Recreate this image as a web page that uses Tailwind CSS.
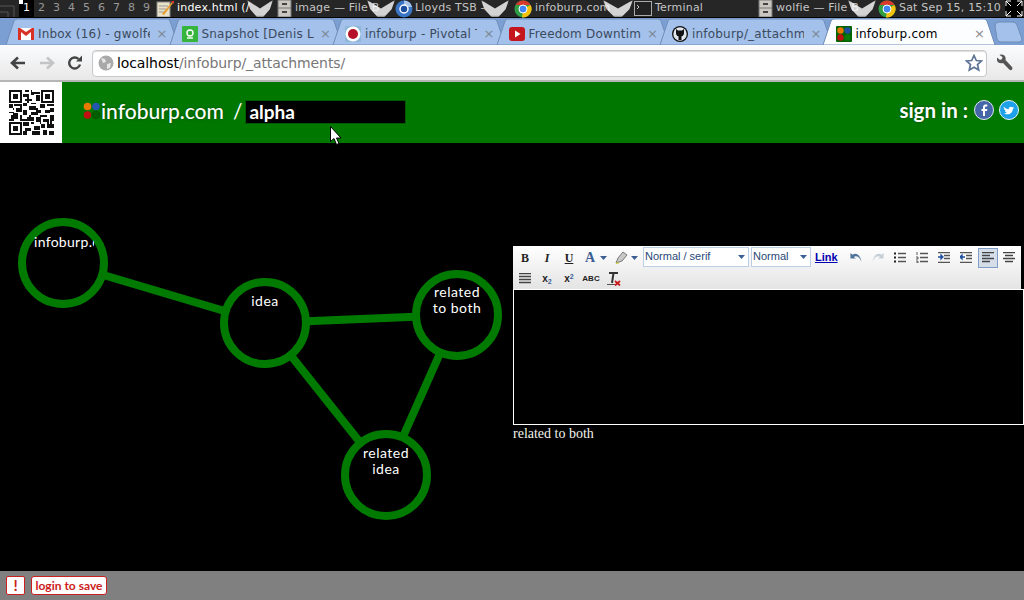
<!DOCTYPE html>
<html lang="en">
<head>
  <meta charset="UTF-8" />
  <title>infoburp.com</title>
  <script src="https://cdn.jsdelivr.net/npm/@tailwindcss/browser@4"></script>
</head>
<body class="w-[1024px] h-[600px] overflow-hidden bg-black flex flex-col relative font-['DejaVu_Sans',sans-serif]">

  <!-- desktop panel -->
  <div class="h-[18px] shrink-0 bg-[#262626] border-b border-black flex items-center text-[11px] tracking-[0.2px] text-[#c4c4c4] whitespace-nowrap relative">
    <svg class="w-[19px] h-[17px] shrink-0" viewBox="0 0 19 17"><path d="M0 6h14v11M0 12h8v5" fill="none" stroke="#555"/></svg>
    <div class="w-[15px] h-[17px] bg-black text-white text-center relative">1<span class="absolute left-0 top-0 w-[4px] h-[4px] bg-white"></span></div>
    <div class="flex text-center text-[#999]">
      <span class="w-[15px]">2</span><span class="w-[15px]">3</span><span class="w-[15px]">4</span><span class="w-[15px]">5</span><span class="w-[15px]">6</span><span class="w-[15px]">7</span><span class="w-[15px]">8</span><span class="w-[15px]">9</span>
    </div>
    <!-- notepad -->
    <svg class="w-[18px] h-[17px] ml-[2px] shrink-0" viewBox="0 0 18 17"><rect x="1" y="2" width="13" height="15" fill="#e8e2c8" stroke="#888"/><path d="M3 6h9M3 9h7M3 12h5" stroke="#999"/><path d="M6 14 16 2l1 1L8 15z" fill="#e89a2a"/><path d="M15 1h3v3z" fill="#d33"/></svg>
    <span class="ml-[3px] w-[82px] overflow-hidden text-white">index.html (/</span>
    <span class="w-[26px] h-[17px] bg-white/80 blur-[1px] -ml-[12px] [clip-path:polygon(0_0,50%_50%,100%_0,88%_55%,62%_100%,38%_100%,12%_55%)]"></span>
    <!-- filing cabinet -->
    <svg class="w-[16px] h-[17px] ml-[3px] shrink-0" viewBox="0 0 16 17"><rect x="2" y="0" width="13" height="17" fill="#c9c7bf" stroke="#777"/><path d="M2 8h13" stroke="#777"/><path d="M6 4h5M6 12h5" stroke="#444" stroke-width="2"/></svg>
    <span class="ml-[3px] w-[84px] overflow-hidden">image — File B</span>
    <span class="w-[28px] h-[17px] bg-white/80 blur-[1px] -ml-[12px] [clip-path:polygon(0_0,50%_50%,100%_0,88%_55%,62%_100%,38%_100%,12%_55%)]"></span>
    <!-- chromium -->
    <svg class="w-[18px] h-[18px] shrink-0" viewBox="0 0 18 18"><circle cx="9" cy="9" r="8.5" fill="#3a74c4"/><path d="M9 .5A8.5 8.5 0 0 1 17 7H9z" fill="#a9c4e8"/><circle cx="9" cy="9" r="4" fill="#1c4f9c" stroke="#fff" stroke-width="1.5"/></svg>
    <span class="ml-[2px] w-[78px] overflow-hidden">Lloyds TSB -</span>
    <span class="w-[28px] h-[17px] bg-white/80 blur-[1px] -ml-[12px] [clip-path:polygon(0_0,50%_50%,100%_0,88%_55%,62%_100%,38%_100%,12%_55%)]"></span>
    <!-- chrome -->
    <svg class="w-[18px] h-[18px] ml-[5px] shrink-0" viewBox="0 0 18 18"><circle cx="9" cy="9" r="8.5" fill="#2f9e44"/><path d="M1.6 5A8.5 8.5 0 0 1 16.6 5H9z" fill="#d8392b"/><path d="M16.6 5A8.5 8.5 0 0 1 8 17.4L9 9z" fill="#f4c20d"/><circle cx="9" cy="9" r="4" fill="#4285f4" stroke="#fff"/></svg>
    <span class="ml-[3px] w-[76px] overflow-hidden">infoburp.com</span>
    <span class="w-[30px] h-[17px] bg-white/80 blur-[1px] -ml-[8px] [clip-path:polygon(0_0,50%_50%,100%_0,88%_55%,62%_100%,38%_100%,12%_55%)]"></span>
    <!-- terminal -->
    <svg class="w-[18px] h-[15px] ml-[1px] shrink-0" viewBox="0 0 18 15"><rect x=".5" y=".5" width="17" height="14" fill="#222" stroke="#aaa"/><path d="M3 4l2 2-2 2" fill="none" stroke="#ccc"/></svg>
    <span class="ml-[3px] w-[102px]">Terminal</span>
    <svg class="w-[16px] h-[17px] shrink-0" viewBox="0 0 16 17"><rect x="2" y="0" width="13" height="17" fill="#c9c7bf" stroke="#777"/><path d="M2 8h13" stroke="#777"/><path d="M6 4h5M6 12h5" stroke="#444" stroke-width="2"/></svg>
    <span class="ml-[3px] w-[84px] overflow-hidden">wolfie — File B</span>
    <span class="w-[28px] h-[17px] bg-white/80 blur-[1px] -ml-[12px] [clip-path:polygon(0_0,50%_50%,100%_0,88%_55%,62%_100%,38%_100%,12%_55%)]"></span>
    <svg class="w-[18px] h-[18px] ml-[2px] shrink-0" viewBox="0 0 18 18"><circle cx="9" cy="9" r="8.5" fill="#2f9e44"/><path d="M1.6 5A8.5 8.5 0 0 1 16.6 5H9z" fill="#d8392b"/><path d="M16.6 5A8.5 8.5 0 0 1 8 17.4L9 9z" fill="#f4c20d"/><circle cx="9" cy="9" r="4" fill="#4285f4" stroke="#fff"/></svg>
    <span class="ml-[3px] w-[106px]">Sat Sep 15, 15:10</span>
    <svg class="w-[18px] h-[17px] shrink-0" viewBox="0 0 18 17"><rect width="18" height="17" fill="#000"/><path d="M1 6V1h5M1 1l5 5M17 6V1h-5M17 1l-5 5M1 11v5h5M1 16l5-5M17 11v5h-5M17 16l-5-5" fill="none" stroke="#fff"/></svg>
  </div>

  <!-- tab strip -->
  <div class="h-[27px] shrink-0 bg-[#7b9fd3] relative flex items-center pl-[10px] pt-[4px] text-[12px] tracking-[0.2px] text-[#3c4a5e] whitespace-nowrap">
    <svg class="absolute left-0 top-0 w-[1024px] h-[27px]" viewBox="0 0 1024 27">
      <g fill="#a3c1ea" stroke="#6f8db8">
        <path d="M6 27 14 3q1-2 3-2h150q2 0 3 2l8 24z"/>
        <path d="M170 27 178 3q1-2 3-2h150q2 0 3 2l8 24z"/>
        <path d="M333 27 341 3q1-2 3-2h150q2 0 3 2l8 24z"/>
        <path d="M497 27 505 3q1-2 3-2h150q2 0 3 2l8 24z"/>
        <path d="M660 27 668 3q1-2 3-2h150q2 0 3 2l8 24z"/>
        <path d="M995 8q0-4 4-4h14q3 0 4 3l5 14q0 3-3 3h-18q-3 0-4-3z"/>
      </g>
      <path d="M823 27 831 3q1-2 3-2h150q2 0 3 2l8 24z" fill="#fbfdff" stroke="#6f8db8"/>
    </svg>
    <div class="relative w-[163.5px] flex items-center pl-[8px] pr-[6px]">
      <svg class="w-[16px] h-[12px] shrink-0" viewBox="0 0 16 12"><rect width="16" height="12" fill="#fff"/><path d="M0 0v12h3V4l5 4 5-4v8h3V0h-2L8 4 2 0z" fill="#d93025"/></svg>
      <span class="ml-[4px] w-[112px] overflow-hidden">Inbox (16) - gwolfe</span>
      <span class="ml-auto text-[#7d8794] text-[13px]">×</span>
    </div>
    <div class="relative w-[163.5px] flex items-center pl-[8px] pr-[6px]">
      <svg class="w-[16px] h-[16px] shrink-0" viewBox="0 0 16 16"><rect width="16" height="16" rx="1" fill="#35b53c"/><circle cx="8" cy="7" r="3" fill="none" stroke="#fff" stroke-width="1.4"/><path d="M5 12h6" stroke="#fff" stroke-width="1.4"/></svg>
      <span class="ml-[4px] w-[112px] overflow-hidden">Snapshot  [Denis L</span>
      <span class="ml-auto text-[#7d8794] text-[13px]">×</span>
    </div>
    <div class="relative w-[163.5px] flex items-center pl-[8px] pr-[6px]">
      <svg class="w-[16px] h-[16px] shrink-0" viewBox="0 0 16 16"><rect width="16" height="16" fill="#8fb8d8"/><circle cx="8" cy="8" r="7.5" fill="#fff"/><circle cx="8" cy="8" r="5" fill="#b3122a"/></svg>
      <span class="ml-[4px] w-[112px] overflow-hidden">infoburp - Pivotal T</span>
      <span class="ml-auto text-[#7d8794] text-[13px]">×</span>
    </div>
    <div class="relative w-[163.5px] flex items-center pl-[8px] pr-[6px]">
      <svg class="w-[16px] h-[14px] shrink-0" viewBox="0 0 16 14"><rect width="16" height="14" rx="3" fill="#c4161c"/><path d="M6 3.5v7L11.500 7z" fill="#fff"/></svg>
      <span class="ml-[4px] w-[112px] overflow-hidden">Freedom Downtime</span>
      <span class="ml-auto text-[#7d8794] text-[13px]">×</span>
    </div>
    <div class="relative w-[163.5px] flex items-center pl-[8px] pr-[6px]">
      <svg class="w-[16px] h-[16px] shrink-0" viewBox="0 0 16 16"><circle cx="8" cy="8" r="8" fill="#111"/><circle cx="8" cy="8" r="6.700" fill="#dfe6ee"/><path d="M4 3l2 1.500h4L12 3v4c0 2-1 3-2.500 3.300V14h-3v-3.700C5 10 4 9 4 7z" fill="#111"/></svg>
      <span class="ml-[4px] w-[112px] overflow-hidden">infoburp/_attachm</span>
      <span class="ml-auto text-[#7d8794] text-[13px]">×</span>
    </div>
    <div class="relative w-[163.5px] flex items-center pl-[8px] pr-[6px] text-black">
      <svg class="w-[16px] h-[16px] shrink-0" viewBox="0 0 16 16"><rect width="16" height="16" rx="1" fill="#006400"/><circle cx="4.500" cy="4.500" r="3.200" fill="#e87a00"/><circle cx="11.500" cy="4.500" r="3.200" fill="#1d4fa0"/><circle cx="4.500" cy="11.500" r="3.200" fill="#c01010"/><circle cx="11.500" cy="11.500" r="3.200" fill="#0a7a0a"/></svg>
      <span class="ml-[4px]">infoburp.com</span>
      <span class="ml-auto text-[#8a8a8a] text-[13px]">×</span>
    </div>
  </div>

  <!-- browser toolbar -->
  <div class="h-[37px] shrink-0 bg-gradient-to-b from-[#fbfcfe] to-[#e8e8e8] border-b-2 border-[#b5b5b5] flex items-center pl-[10px] pr-[8px]">
    <svg class="w-[16px] h-[14px] shrink-0" viewBox="0 0 16 14"><path d="M15 7H3M8 1.500 2 7l6 5.500" fill="none" stroke="#444" stroke-width="2.600"/></svg>
    <svg class="w-[16px] h-[14px] ml-[13px] shrink-0" viewBox="0 0 16 14"><path d="M1 7h12M8 1.500 14 7l-6 5.500" fill="none" stroke="#c4c4c4" stroke-width="2.600"/></svg>
    <svg class="w-[16px] h-[16px] ml-[12px] shrink-0" viewBox="0 0 16 16"><path d="M13 9.500A5.500 5.500 0 1 1 11.500 4" fill="none" stroke="#444" stroke-width="2.400"/><path d="M9 6.500h6V.5z" fill="#444"/></svg>
    <div class="ml-[9px] w-[895px] h-[27px] mt-[1px] bg-white border border-[#c8c8c8] rounded-[4px] flex items-center pl-[5px] text-[14px] tracking-[-0.1px] shadow-[inset_0_1px_1px_#ddd]">
      <svg class="w-[16px] h-[16px] shrink-0" viewBox="0 0 16 16"><circle cx="8" cy="8" r="7.500" fill="#a9a9a9"/><path d="M3 3l4 1 1 3-3 1zM9 9l4-1-1 5-3 1z" fill="#e6e6e6"/></svg>
      <span class="ml-[3px] text-black">localhost<span class="text-[#777]">/infoburp/_attachments/</span></span>
      <svg class="w-[18px] h-[18px] ml-auto mr-[3px] shrink-0" viewBox="0 0 18 18"><path d="M9 1.500l2.300 5 5.200.5-4 3.500 1.200 5.500L9 13.200 4.300 16l1.200-5.500-4-3.500 5.200-.5z" fill="#fff" stroke="#5f7596" stroke-width="1.700"/></svg>
    </div>
    <svg class="w-[18px] h-[18px] ml-[8px] shrink-0" viewBox="0 0 18 18"><path d="M2 3.500l3 2.500 2-1 .5-2L4.500 1C7 0 10 1 10.500 3.500c.3 1 0 2 0 2.500l6.500 7c.7 1 .5 2-.2 2.700-.8.700-1.800.6-2.500-.1L8 9C6 9.500 3 9.500 2 6.500z" fill="#555"/></svg>
  </div>

  <!-- site header -->
  <header class="h-[61px] shrink-0 bg-[#007800] flex items-center relative font-['Lato',sans-serif] text-white">
    <div class="w-[62px] h-[61px] bg-white shrink-0 flex items-center justify-center">
      <svg class="w-[45px] h-[45px]" viewBox="0 0 25 25" shape-rendering="crispEdges"><path fill="#111" d="M0 0h7v7H0zM18 0h7v7h-7zM0 18h7v7H0z"/><path fill="#fff" d="M1 1h5v5H1zM19 1h5v5h-5zM1 19h5v5H1z"/><path fill="#111" d="M2 2h3v3H2zM20 2h3v3h-3zM2 20h3v3H2zM9 0h2v1H9zM12 0h1v3h-1zM14 1h3v1h-3zM8 2h3v2H8zM15 3h2v3h-2zM9 5h4v1H9zM8 7h2v2H8zM12 7h3v1h-3zM0 8h2v2H0zM3 8h4v1H3zM17 8h3v2h-3zM21 8h4v1h-4zM11 9h4v2h-4zM4 10h3v2H4zM0 12h3v1H0zM8 11h2v3H8zM16 11h2v2h-2zM20 11h3v2h-3zM12 12h3v2h-3zM1 14h4v2H1zM6 14h1v3H6zM18 14h3v1h-3zM23 14h2v3h-2zM10 15h4v2h-4zM15 15h2v3h-2zM19 16h3v2h-3zM8 18h3v2H8zM12 18h2v1h-2zM18 19h2v2h-2zM21 19h4v2h-4zM9 21h3v2H9zM14 20h3v2h-3zM8 23h2v2H8zM13 23h4v2h-4zM19 22h2v3h-2zM22 23h3v2h-3zM2 10h1v1H2zM0 16h3v1H0zM13 1h1v2h-1zM10 4h1v3h-1zM6 9h1v2H6zM15 10h1v4h-1zM18 9h2v1h-2zM23 10h2v2h-2zM2 13h3v1H2zM7 16h3v1H7zM11 14h1v1h-1zM17 14h1v5h-1zM21 16h1v3h-1zM23 17h1v2h-1z"/></svg>
    </div>
    <div class="flex items-center -mt-[4px]">
      <svg class="w-[18px] h-[18px] ml-[21px] shrink-0" viewBox="0 0 18 18"><circle cx="4.500" cy="4.500" r="3.800" fill="#e87a00"/><circle cx="13" cy="4.500" r="3.800" fill="#2458b0"/><circle cx="4.500" cy="13" r="3.800" fill="#c01010"/><circle cx="13" cy="13" r="3.800" fill="#006000" stroke="#004c00" stroke-width=".8"/></svg>
      <span class="text-[21px] leading-none font-medium [text-shadow:0_0_3px_#004400]">infoburp.com</span>
      <span class="text-[21px] leading-none ml-[9px]">/</span>
      <div class="ml-[3px] w-[161px] h-[24px] bg-black border border-[#005a00] pl-[3px] flex items-center text-[19px] font-bold mt-[3px]">alpha</div>
    </div>
    <div class="ml-auto flex items-center mr-[5px] -mt-[5px]">
      <span class="text-[20.5px] font-bold mr-[6px] [text-shadow:0_0_3px_#004400]">sign in :</span>
      <svg class="w-[20px] h-[20px] mr-[5px] shrink-0" viewBox="0 0 20 20"><circle cx="10" cy="10" r="9.500" fill="#4567a8" stroke="#dfe6f5"/><path d="M11 16v-5h2l.3-2H11V7.500c0-.7.300-1 1-1h1.300v-2H11.500C9.500 4.500 9 6 9 7.200V9H7.500v2H9v5z" fill="#fff"/></svg>
      <svg class="w-[20px] h-[20px] shrink-0" viewBox="0 0 20 20"><circle cx="10" cy="10" r="9.500" fill="#1da1e8" stroke="#e6f6ff"/><path d="M4.500 6.500c1.500 1.700 3.300 2.600 5.300 2.700-.3-2 1.800-3.300 3.300-2 .6 0 1.200-.2 1.600-.5-.2.600-.5 1-1 1.300l1.300-.3c-.3.500-.7.900-1.200 1.200.1 3.500-3.500 7-8.800 4.500 1.300 0 2.300-.3 3-1-1 0-1.900-.6-2.200-1.500.4.100.8.100 1.100 0C5.500 10 4.700 9 4.800 8c.3.200.7.300 1 .3-1-.6-1.400-1-1.300-1.800z" fill="#fff"/></svg>
    </div>
  </header>

  <!-- main page -->
  <main class="flex-1 bg-black relative">
    <!-- graph: nodes sit on a free canvas -->
    <svg class="absolute left-0 top-0 w-[512px] h-[428px]" viewBox="0 143 512 428" fill="none" stroke="#007a00" stroke-width="8">
      <path d="M63 263 265 323M265 323 457 315M265 323 386 475M457 315 386 475"/>
      <g fill="#000">
        <circle cx="63" cy="263" r="41"/>
        <circle cx="265" cy="323" r="41"/>
        <circle cx="457" cy="315" r="41"/>
        <circle cx="386" cy="475" r="41"/>
      </g>
    </svg>
    <div class="absolute left-[34px] top-[91px] w-[60px] overflow-hidden whitespace-nowrap text-[14px] leading-[16px] tracking-[0.3px] text-white font-['Lato',sans-serif]">infoburp.com</div>
    <div class="absolute left-[225px] top-[150px] w-[80px] text-center text-[14px] leading-[16px] tracking-[0.5px] text-white font-['Lato',sans-serif]">idea</div>
    <div class="absolute left-[417px] top-[141px] w-[80px] text-center text-[14px] leading-[16px] tracking-[0.5px] text-white font-['Lato',sans-serif]">related<br />to both</div>
    <div class="absolute left-[346px] top-[302px] w-[80px] text-center text-[14px] leading-[16px] tracking-[0.5px] text-white font-['Lato',sans-serif]">related<br />idea</div>

    <!-- rich text editor -->
    <div class="absolute left-[513px] top-[103px] w-[511px]">
      <div class="h-[43px] w-[508px] bg-gradient-to-b from-[#ffffff] to-[#e4e4e4] flex flex-wrap content-start items-center pt-[1px] text-[#222]">
        <div class="w-full h-[21px] flex items-center font-['Liberation_Sans',sans-serif]">
          <span class="w-[22px] ml-[1px] text-center text-[12px] font-bold font-['Liberation_Serif',serif]">B</span>
          <span class="w-[22px] text-center text-[12px] italic font-bold font-['Liberation_Serif',serif]">I</span>
          <span class="w-[22px] text-center text-[12px] underline font-bold font-['Liberation_Serif',serif]">U</span>
          <span class="w-[20px] text-center text-[14px] font-bold text-[#3c5f94] font-['Liberation_Serif',serif]">A</span>
          <svg class="w-[7px] h-[4px]" viewBox="0 0 7 4"><path d="M0 0h7L3.500 4z" fill="#3c5f94"/></svg>
          <svg class="w-[13px] h-[13px] ml-[8px]" viewBox="0 0 13 13"><path d="M1 12 3 7l5-6 4 3-5 6z" fill="#c9c9c9" stroke="#777"/><path d="M1 12h3" stroke="#cc0"/></svg>
          <svg class="w-[7px] h-[4px] ml-[3px]" viewBox="0 0 7 4"><path d="M0 0h7L3.500 4z" fill="#3c5f94"/></svg>
          <div class="ml-[5px] w-[106px] h-[20px] -mt-[2px] bg-white border border-[#bccde6] flex items-center pl-[1px] text-[11px] text-[#284878]">Normal / serif<svg class="w-[7px] h-[4px] ml-auto mr-[3px]" viewBox="0 0 7 4"><path d="M0 0h7L3.500 4z" fill="#3c5f94"/></svg></div>
          <div class="ml-[2px] w-[60px] h-[20px] -mt-[2px] bg-white border border-[#bccde6] flex items-center pl-[1px] text-[11px] text-[#284878]">Normal<svg class="w-[7px] h-[4px] ml-auto mr-[3px]" viewBox="0 0 7 4"><path d="M0 0h7L3.500 4z" fill="#3c5f94"/></svg></div>
          <span class="ml-[4px] w-[26px] text-[11px] font-bold underline text-[#0000b0]">Link</span>
          <svg class="w-[14px] h-[10px] ml-[8px]" viewBox="0 0 12 9"><path d="M1 0v5h5L4 3.500C6 2 9 3 11 8 10 2 6-1 3 1.500z" fill="#4d7299"/></svg>
          <svg class="w-[14px] h-[10px] ml-[8px]" viewBox="0 0 12 9"><path d="M11 0v5H6l2-1.500C6 2 3 3 1 8 2 2 6-1 9 1.500z" fill="#c6ced6"/></svg>
          <svg class="w-[12px] h-[11px] ml-[9px]" viewBox="0 0 12 11" stroke="#555" stroke-width="1.300"><path d="M4 1.500h8M4 5.500h8M4 9.500h8"/><path d="M0 1.500h2M0 5.500h2M0 9.500h2" stroke="#222" stroke-width="2"/></svg>
          <svg class="w-[12px] h-[11px] ml-[10px]" viewBox="0 0 12 11" stroke="#555" stroke-width="1.300"><path d="M4 1.500h8M4 5.500h8M4 9.500h8"/><path d="M1 0v3M0 5h2v2H0M0 9h2v2H0" stroke="#333" fill="none" stroke-width=".8"/></svg>
          <svg class="w-[12px] h-[11px] ml-[10px]" viewBox="0 0 12 11" stroke="#555" stroke-width="1.300"><path d="M0 .5h12M6 3.500h6M6 6.500h6M0 10.500h12"/><path d="M0 5h3M3 3l2 2-2 2z" stroke="#1d4fa0" fill="#1d4fa0"/></svg>
          <svg class="w-[12px] h-[11px] ml-[10px]" viewBox="0 0 12 11" stroke="#555" stroke-width="1.300"><path d="M0 .5h12M6 3.500h6M6 6.500h6M0 10.500h12"/><path d="M2 5h3M2 3 0 5l2 2z" stroke="#1d4fa0" fill="#1d4fa0"/></svg>
          <div class="ml-[6px] w-[20px] h-[20px] bg-[#d5dde8] border border-[#7f9fc9] flex items-center justify-center"><svg class="w-[12px] h-[11px]" viewBox="0 0 12 11" stroke="#444" stroke-width="1.300"><path d="M0 .5h12M0 3.500h8M0 6.500h12M0 9.500h8"/></svg></div>
          <svg class="w-[12px] h-[11px] ml-[5px]" viewBox="0 0 12 11" stroke="#444" stroke-width="1.300"><path d="M0 .5h12M2 3.500h8M0 6.500h12M2 9.500h8"/></svg>
        </div>
        <div class="w-full h-[21px] flex items-center">
          <span class="w-[22px] ml-[1px] flex justify-center"><svg class="w-[12px] h-[11px]" viewBox="0 0 12 11" stroke="#444" stroke-width="1.300"><path d="M0 .5h12M0 3.500h12M0 6.500h12M0 9.500h12"/></svg></span>
          <span class="w-[22px] text-center text-[10px] font-bold font-['Liberation_Sans',sans-serif]">x<sub class="text-[7px] text-[#3c5f94]">2</sub></span>
          <span class="w-[22px] text-center text-[10px] font-bold font-['Liberation_Sans',sans-serif]">x<sup class="text-[7px] text-[#3c5f94]">2</sup></span>
          <span class="w-[22px] text-center text-[8px] font-bold font-['Liberation_Sans',sans-serif]">ABC</span>
          <span class="w-[24px] flex justify-center"><svg class="w-[14px] h-[14px]" viewBox="0 0 14 14"><path d="M2 1h9M6.500 1 5 11" stroke="#333" stroke-width="2" fill="none"/><path d="M0 12.500h8" stroke="#555"/><path d="M8 9l5 4.500M13 9l-5 4.500" stroke="#c81a1a" stroke-width="1.800"/></svg></span>
        </div>
      </div>
      <div class="h-[136px] border border-white bg-black"></div>
      <p class="text-[14px] leading-[16px] mt-[1px] text-[#f4f4ec] font-['Liberation_Serif',serif]">related to both</p>
    </div>
  </main>

  <!-- footer -->
  <footer class="h-[29px] shrink-0 bg-[#808080] flex items-center pl-[6px] gap-[6px] font-['Lato',sans-serif]">
    <div class="w-[19px] h-[19px] bg-white border border-[#cc2020] rounded-[2px] flex items-center justify-center text-[#cc2020] font-bold text-[15px] leading-none">!</div>
    <div class="h-[19px] w-[76px] bg-white border border-[#cc2020] rounded-[3px] flex items-center justify-center text-[#cc2020] font-bold text-[12px] leading-none">login to save</div>
  </footer>

  <!-- mouse pointer -->
  <svg class="absolute left-[330px] top-[126px] w-[12px] h-[19px]" viewBox="0 0 12 19"><path d="M.5.500v15l3.500-3 2.500 6 2.500-1-2.500-5.500H11z" fill="#fff" stroke="#000"/></svg>
</body>
</html>
